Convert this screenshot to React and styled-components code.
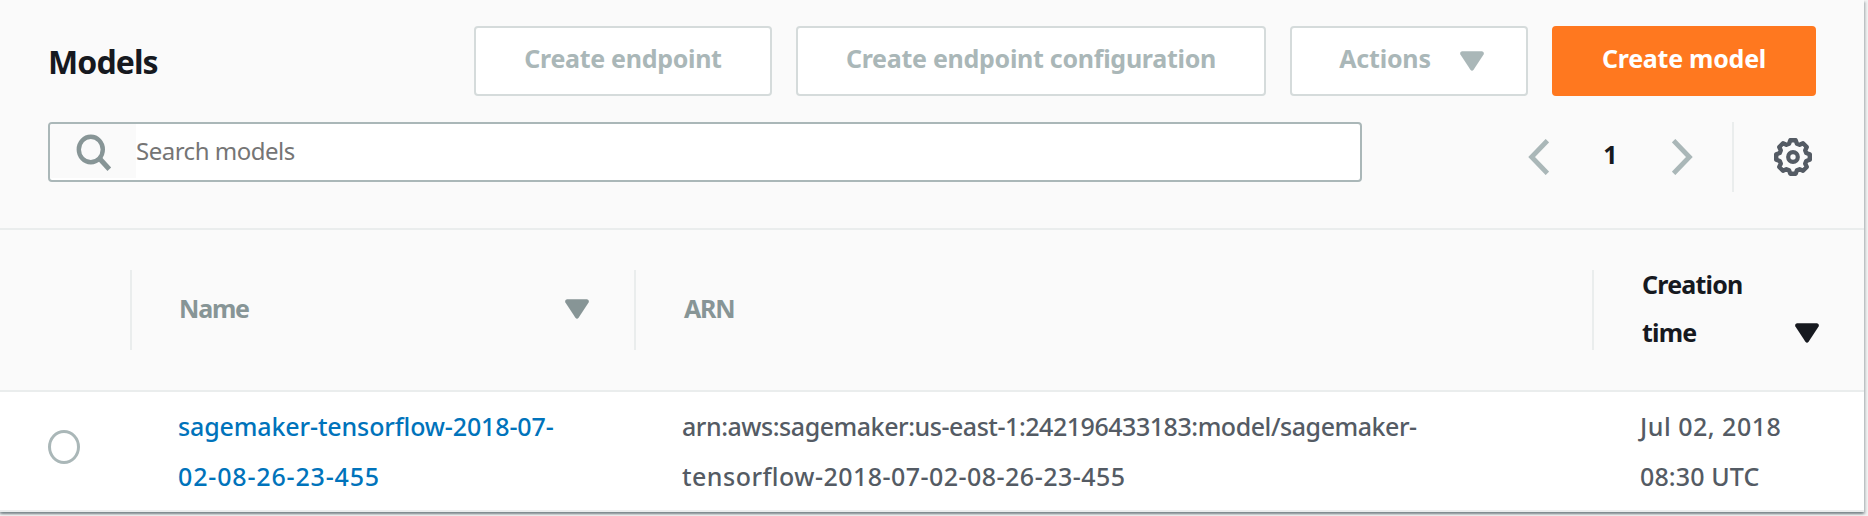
import React from "react";
import styled, { createGlobalStyle } from "styled-components";

const GlobalStyle = createGlobalStyle`
  *, *::before, *::after { box-sizing: border-box; }
  body {
    margin: 0;
    height: 516px;
    overflow: hidden;
    background: #f2f3f3;
    color: #16191f;
    font-family: "Noto Sans", "Open Sans", sans-serif;
    font-size: 25px;
  }
`;

const Panel = styled.section`
  width: 1864px;
  height: 512px;
  background: #fafafa;
  box-shadow:
    0 2px 2px 0 rgba(0, 28, 36, 0.3),
    2px 2px 2px 0 rgba(0, 28, 36, 0.15),
    -2px 2px 2px 0 rgba(0, 28, 36, 0.15);
`;

const PanelHeader = styled.header`
  height: 230px;
  padding: 26px 48px 0;
  border-bottom: 2px solid #eaeded;
`;

const TitleRow = styled.div`
  display: flex;
  align-items: center;
  justify-content: space-between;
  height: 70px;
`;

const Title = styled.h1`
  margin: 0;
  padding-top: 1px;
  font-size: 32px;
  font-weight: 700;
  line-height: 40px;
  letter-spacing: -0.9px;
`;

const ButtonGroup = styled.div`
  display: flex;
  gap: 24px;
`;

const Button = styled.button`
  display: flex;
  align-items: center;
  justify-content: center;
  gap: 29px;
  width: ${(p) => p.$width}px;
  height: 70px;
  padding: 0 0 6px;
  border: 2px solid ${(p) => (p.$primary ? "#ff781f" : "#d5dbdb")};
  border-radius: 4px;
  background: ${(p) => (p.$primary ? "#ff781f" : "#fff")};
  color: ${(p) => (p.$primary ? "#fff" : "#aab7b8")};
  font: 700 25px/50px "Noto Sans", "Open Sans", sans-serif;
  letter-spacing: ${(p) => p.$track}px;
  white-space: nowrap;

  svg { margin: 6px -5px 0 0; }
`;

const FilterRow = styled.div`
  display: flex;
  justify-content: space-between;
  margin-top: 26px;
`;

const SearchBox = styled.label`
  display: flex;
  width: 1314px;
  height: 60px;
  border: 2px solid #aab7b8;
  border-radius: 4px;
  background: #fff;
  overflow: hidden;
`;

const SearchIconCell = styled.span`
  width: 86px;
  height: 54px;
  background: #fafafa;
`;

const SearchInput = styled.input`
  flex: 1;
  height: 54px;
  padding: 0;
  border: 0;
  outline: 0;
  background: transparent;
  font: 400 24px/54px "Noto Sans", "Open Sans", sans-serif;
  letter-spacing: -0.5px;
  &::placeholder { color: #757575; opacity: 1; }
`;

const Pagination = styled.nav`
  display: flex;
  align-items: center;
  height: 70px;
`;

const PageNumber = styled.span`
  width: 123px;
  padding: 0 0 6px;
  font-weight: 700;
  line-height: 50px;
  text-align: center;
`;

const Preferences = styled.span`
  display: flex;
  align-items: center;
  justify-content: flex-end;
  width: 84px;
  height: 70px;
  margin-left: 39px;
  padding-right: 3px;
  border-left: 2px solid #eaeded;
`;

const Glyph = styled.svg`
  display: block;
  flex: none;
`;

const gridColumns = "130px 504px 958px 272px";

const TableHead = styled.div`
  display: grid;
  grid-template-columns: ${gridColumns};
  align-items: center;
  height: 162px;
  border-bottom: 2px solid #eaeded;
`;

const HeadCell = styled.div`
  display: flex;
  align-items: ${(p) => (p.$wrap ? "flex-end" : "center")};
  justify-content: space-between;
  height: 80px;
  padding: 0 45px 0 ${(p) => p.$indent ?? 47}px;
  border-left: 2px solid #eaeded;
  color: ${(p) => (p.$sorted ? "#16191f" : "#879596")};
`;

const HeadLabel = styled.span`
  display: flex;
  flex-direction: column;
  margin: ${(p) => (p.$wrap ? "0 0 -6px" : "0 0 5px")};
  font-weight: 700;
  line-height: 48px;
  letter-spacing: ${(p) => p.$track}px;
`;

const SortMark = styled.span`
  padding-bottom: ${(p) => (p.$wrap ? 7 : 2)}px;
`;

const TableRow = styled.div`
  display: grid;
  grid-template-columns: ${gridColumns};
  align-items: center;
  height: 120px;
  border-bottom: 2px solid #eaeded;
  background: #fff;
`;

const SelectCell = styled.div`
  padding: 0 0 8px 48px;
`;

const Radio = styled.span`
  display: block;
  width: 32px;
  height: 34px;
  border: 3px solid #aab7b8;
  border-radius: 50%;
  background: #fff;
`;

const Cell = styled.div`
  display: flex;
  flex-direction: column;
  padding-left: 48px;
  color: ${(p) => (p.$link ? "#0073bb" : "#545b64")};
  font-weight: 500;
  line-height: 50px;
`;

const Line = styled.span`
  letter-spacing: ${(p) => p.$track}px;
  white-space: nowrap;
`;

const Caret = () => (
  <Glyph width="24" height="20" viewBox="0 0 24 20">
    <path
      d="M2 0.2H22Q24.6 1 23.6 3.6L13.6 18.8Q12 20.6 10.4 18.8L0.4 3.6Q-0.6 1 2 0.2Z"
      fill="currentColor"
    />
  </Glyph>
);

const SearchIcon = () => (
  <Glyph width="86" height="54" viewBox="0 0 86 54" fill="none" stroke="#879596">
    <ellipse cx="40.8" cy="25.5" rx="12" ry="12.7" strokeWidth="4.4" />
    <path d="M49.5 34.5L59.3 45.3" strokeWidth="5" />
  </Glyph>
);

const Chevron = ({ next }) => (
  <Glyph width="21" height="36" viewBox="0 0 21 36" fill="none" stroke="#aab7b8" strokeWidth="4.8">
    <path d={next ? "M1.6 1.6L17.4 18L1.6 34.4" : "M19.4 1.6L3.6 18L19.4 34.4"} />
  </Glyph>
);

const gearPoints = Array.from({ length: 8 }, (_, i) =>
  [[-9, 17], [9, 17], [16.5, 13.9], [28.5, 13.9]].map(([offset, r]) => {
    const a = ((i * 45 + offset) * Math.PI) / 180;
    return `${(20 + r * Math.sin(a)).toFixed(2)},${(20 - r * Math.cos(a)).toFixed(2)}`;
  }).join(" ")
).join(" ");

const Gear = () => (
  <Glyph width="40" height="40" viewBox="0 0 40 40" fill="none" stroke="#545b64" strokeLinejoin="round">
    <polygon points={gearPoints} strokeWidth="4.4" />
    <circle cx="20" cy="20" r="4.8" strokeWidth="4.2" />
  </Glyph>
);

export default function App() {
  return (
    <>
      <GlobalStyle />
      <Panel>
        <PanelHeader>
          <TitleRow>
            <Title>Models</Title>
            <ButtonGroup>
              <Button $width={298} $track={-0.3}>Create endpoint</Button>
              <Button $width={470} $track={-0.28}>Create endpoint configuration</Button>
              <Button $width={238} $track={-0.2}>
                Actions
                <Caret />
              </Button>
              <Button $width={264} $track={-0.25} $primary>Create model</Button>
            </ButtonGroup>
          </TitleRow>
          <FilterRow>
            <SearchBox>
              <SearchIconCell><SearchIcon /></SearchIconCell>
              <SearchInput placeholder="Search models" />
            </SearchBox>
            <Pagination>
              <Chevron />
              <PageNumber>1</PageNumber>
              <Chevron next />
              <Preferences><Gear /></Preferences>
            </Pagination>
          </FilterRow>
        </PanelHeader>

        <TableHead>
          <span />
          <HeadCell>
            <HeadLabel $track={-1.2}>Name</HeadLabel>
            <SortMark><Caret /></SortMark>
          </HeadCell>
          <HeadCell $indent={48}>
            <HeadLabel $track={-1.2}>ARN</HeadLabel>
          </HeadCell>
          <HeadCell $wrap $sorted $indent={48}>
            <HeadLabel $wrap $track={-0.8}>
              <span>Creation</span>
              <span>time</span>
            </HeadLabel>
            <SortMark $wrap><Caret /></SortMark>
          </HeadCell>
        </TableHead>

        <TableRow>
          <SelectCell><Radio /></SelectCell>
          <Cell $link>
            <Line $track={-0.13}>sagemaker-tensorflow-2018-07-</Line>
            <Line $track={0.84}>02-08-26-23-455</Line>
          </Cell>
          <Cell>
            <Line $track={-0.46}>arn:aws:sagemaker:us-east-1:242196433183:model/sagemaker-</Line>
            <Line $track={0.47}>tensorflow-2018-07-02-08-26-23-455</Line>
          </Cell>
          <Cell>
            <Line $track={0.5}>Jul 02, 2018</Line>
            <Line $track={0.12}>08:30 UTC</Line>
          </Cell>
        </TableRow>
      </Panel>
    </>
  );
}
